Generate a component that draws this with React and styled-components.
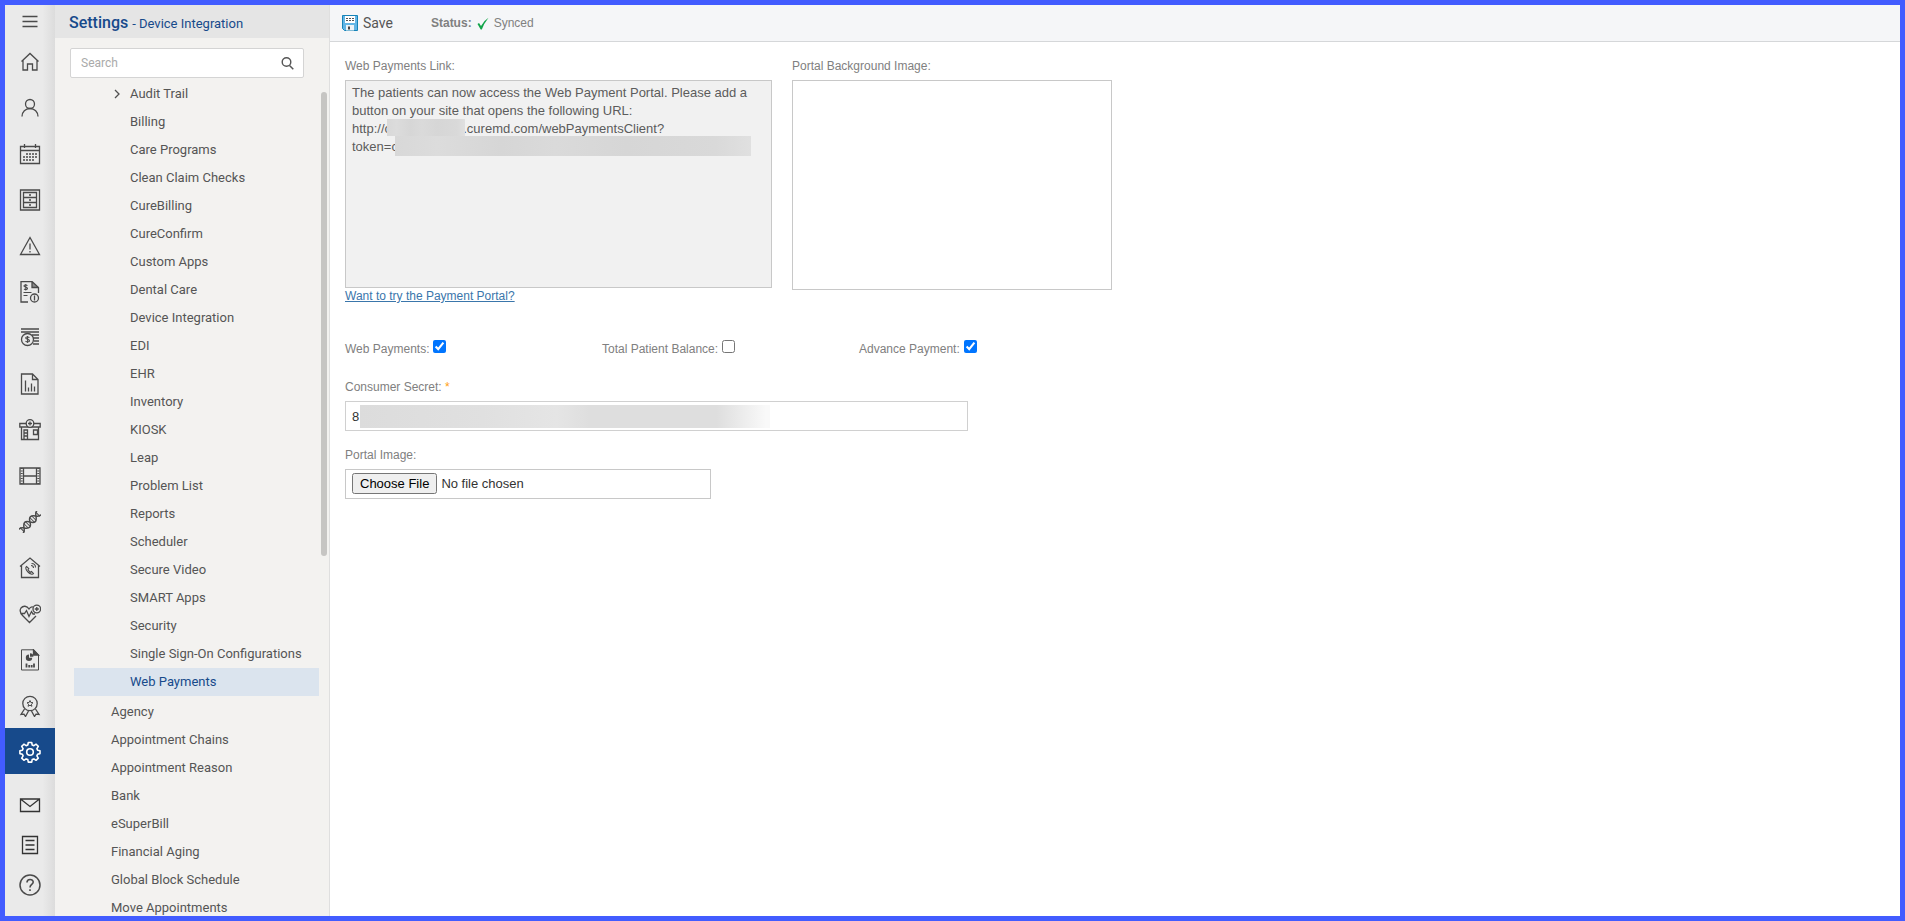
import React, { useState } from "react";
import styled, { createGlobalStyle } from "styled-components";

const GlobalStyle = createGlobalStyle`
  * {
    box-sizing: border-box;
  }
  body {
    margin: 0;
    font-family: "Liberation Sans", Arial, sans-serif;
    font-size: 12px;
    color: #808080;
    background: #fff;
  }
`;

const Page = styled.div`
  display: flex;
  height: 100vh;
  border: 5px solid #425cff;
  overflow: hidden;
`;

const Rail = styled.nav`
  display: flex;
  flex-direction: column;
  flex-shrink: 0;
  width: 50px;
  background: linear-gradient(to right, #eaeaea 75%, #dcdcdc);
`;
const RailButton = styled.button`
  display: flex;
  align-items: center;
  justify-content: center;
  height: ${(props) => props.$height || 46}px;
  flex-shrink: 0;
  padding: ${(props) => (props.$height ? 0 : 2)}px 0 0;
  border: none;
  color: ${(props) => (props.$active ? "#fff" : "#4a4a4a")};
  background: ${(props) => (props.$active ? "#174a8b" : "transparent")};
  cursor: pointer;
`;
const RailFooter = styled.div`
  display: flex;
  flex-direction: column;
  padding-top: 11px;
  flex-shrink: 0;
`;

const Sidebar = styled.aside`
  display: flex;
  flex-direction: column;
  flex-shrink: 0;
  width: 275px;
  border-right: 1px solid #dfdfdf;
  background: #f3f2f0;
  color: #555;
  font-family: Roboto, sans-serif;
`;
const SidebarHeader = styled.h1`
  flex-shrink: 0;
  height: 33px;
  margin: 0;
  padding: 0 14px;
  background: #e5e5e5;
  color: #174a8b;
  font-size: 16px;
  font-weight: 500;
  line-height: 35px;
`;
const HeaderDetail = styled.span`
  font-size: 13px;
  font-weight: 400;
`;
const SearchBox = styled.div`
  display: flex;
  align-items: center;
  flex-shrink: 0;
  height: 30px;
  margin: 10px 25px 2px 15px;
  padding: 0 9px 0 10px;
  border: 1px solid #d4d4d4;
  border-radius: 2px;
  background: #fff;
`;
const SearchInput = styled.input`
  flex: 1;
  min-width: 0;
  padding: 0;
  border: none;
  outline: none;
  font-family: inherit;
  font-size: 12px;
  &::placeholder {
    color: #aaa;
  }
`;
const SearchButton = styled.button`
  display: flex;
  padding: 0;
  border: none;
  background: none;
  color: #555;
`;
const TreeArea = styled.div`
  display: flex;
  flex: 1;
  min-height: 0;
  overflow: hidden;
`;
const Tree = styled.ul`
  flex: 1;
  margin: 0;
  padding: 0 2px 0 19px;
  list-style: none;
`;
const SubTree = styled.ul`
  margin: 0 0 2px;
  padding: 0;
  list-style: none;
`;
const TreeLink = styled.a`
  display: flex;
  align-items: center;
  height: 28px;
  padding: 0 0 2px ${(props) => (props.$nested ? 56 : 37)}px;
  background: ${(props) => (props.$active ? "#dbe4ee" : "transparent")};
  color: ${(props) => (props.$active ? "#174a8b" : "#555")};
  font-size: 13px;
  text-decoration: none;
  white-space: nowrap;
`;
const Expander = styled.svg`
  margin: 2px 10px 0 -16px;
`;
const ScrollThumb = styled.div`
  width: 6px;
  height: 464px;
  margin: 12px 2px 0 0;
  border-radius: 3px;
  background: #c6c5c3;
`;

const Main = styled.main`
  flex: 1;
  min-width: 0;
`;
const Toolbar = styled.div`
  display: flex;
  align-items: center;
  height: 37px;
  padding: 0 12px;
  border-bottom: 1px solid #d5d7d9;
  background: #f5f6f8;
`;
const SaveButton = styled.button`
  display: flex;
  align-items: center;
  gap: 5px;
  margin-right: 38px;
  padding: 0;
  border: none;
  background: none;
  color: #555;
  font-family: Roboto, sans-serif;
  font-size: 14px;
`;
const Status = styled.div`
  display: flex;
  align-items: center;
  gap: 5px;
`;

const Form = styled.form`
  padding: 16px 15px;
`;
const TopRow = styled.div`
  display: flex;
  align-items: flex-start;
  gap: 20px;
`;
const Field = styled.div`
  display: flex;
  flex-direction: column;
  align-items: flex-start;
  margin-bottom: ${(props) => props.$gap || 0}px;
`;
const Label = styled.label`
  line-height: 16px;
  margin-bottom: 6px;
`;
const Required = styled.span`
  color: #ffa011;
`;
const Covered = styled.div`
  position: relative;
  display: flex;
`;
const LinkText = styled.textarea`
  width: 427px;
  height: 208px;
  padding: 3px 6px;
  border: 1px solid #c8c8c8;
  outline: none;
  resize: none;
  background: #f1f1f1;
  color: #5c5c5c;
  font-family: inherit;
  font-size: 13px;
  line-height: 18px;
`;
/* hides the private part of a value */
const Redaction = styled.span`
  position: absolute;
  left: ${(props) => props.$left}px;
  top: ${(props) => props.$top}px;
  width: ${(props) => props.$width}px;
  height: ${(props) => props.$height}px;
  background: ${(props) =>
    props.$fade
      ? "linear-gradient(to right, #dcdcdc, #e0e0e0 30%, #e5e5e5 48%, #dedede 56%, #dedede 87%, #f9f9f9 99%)"
      : "linear-gradient(to right, #d8d8d8, #dcdcdc 12%, #d6d6d6 30%, #dadada 45%, #d6d6d6 65%, #d9d9d9 90%, #e0e0e0)"};
`;
const PortalLink = styled.a`
  color: #3a76ab;
  line-height: 16px;
`;
const ImagePreview = styled.div`
  width: 320px;
  height: 210px;
  border: 1px solid #c8c8c8;
`;
const CheckRow = styled.div`
  display: flex;
  margin: 36px 0 21px;
`;
const CheckField = styled.div`
  display: flex;
  align-items: center;
  width: 257px;
  height: 18px;
`;
const CheckBox = styled.input`
  width: 13px;
  height: 13px;
  margin: 0 0 6px 4px;
`;
const SecretInput = styled.input`
  width: 623px;
  height: 30px;
  padding: 0 6px;
  border: 1px solid #d0d0d0;
  outline: none;
  color: #333;
  font-family: inherit;
  font-size: 13px;
`;
const FileInput = styled.input`
  width: 366px;
  height: 30px;
  padding: 3px 6px;
  border: 1px solid #c8c8c8;
  color: #333;
  font-family: inherit;
  font-size: 13px;
`;

const Icon = ({ size = 22, children }) => (
  <svg
    width={size}
    height={size}
    viewBox="0 0 22 22"
    fill="none"
    stroke="currentColor"
    strokeWidth="1.3"
    aria-hidden="true"
  >
    {children}
  </svg>
);

const icons = {
  menu: <path d="M3.5 5.5h15M3.5 10.5h15M3.5 15.5h15" />,
  home: <path d="M2.5 10.500 11 2.500l8.500 8M4 9.500v9.500h4.500v-6h5v6H18V9.500" />,
  user: (
    <>
      <circle cx="11" cy="7" r="4.500" />
      <path d="M3 19.500c0-4.500 3.500-8 8-8s8 3.500 8 8" />
    </>
  ),
  calendar: (
    <>
      <path d="M1.500 3.500h19v17h-19zM1.500 7.500h19M5.500 1v4M16.500 1v4" />
      <path d="M7 11h12M4 14h15M4 17h11" strokeDasharray="2 1" />
    </>
  ),
  cabinet: (
    <>
      <path d="M1.500 1h19v20h-19zM4.500 3.500h13v15h-13zM4.500 8.500h13M4.500 13.500h13" />
      <path d="M10 6h2M10 11h2M10 16h2" strokeWidth="1.5" />
    </>
  ),
  alert: (
    <>
      <path d="M11 2.500 20.500 19.500h-19z" />
      <path d="M11 8.500v6M11 16v1.500" />
    </>
  ),
  bill: (
    <>
      <path d="M9 21H2V.5h11l6.500 6V12M13 .5v6h6.500" />
      <path d="M13 .5v6h6z" fill="currentColor" stroke="none" opacity="0.6" />
      <path
        d="M8.500 4.500c-2-1-3.500-.5-3.500.5 0 1.500 3.500.5 3.500 2.500 0 1.200-2 1.500-3.500.5M6.800 3v6.500M4.500 11.500h8M4.500 14.500h4"
        strokeWidth="1.1"
      />
      <circle cx="15.500" cy="17" r="4" />
      <path d="M15.500 14.500v5" />
    </>
  ),
  money: (
    <>
      <path d="M2 2h18M2 5h18M13 8h7M14 11h6M15 14h5M14 17h6" />
      <circle cx="8.500" cy="12.500" r="6" />
      <path
        d="M10.500 10.500c-2-1-3.800-.5-3.800.5 0 1.500 3.800 1 3.800 2.700 0 1.300-2.300 1.500-4 .5M8.600 9v7"
        strokeWidth="1.1"
      />
    </>
  ),
  report: (
    <>
      <path d="M2.500 1h11l5.500 5.500V21H2.500zM13.500 1v5.500H19" />
      <path d="M6.500 18.500V7.500M9.500 18.500v-4M12.500 18.500v-8M15.500 18.500v-5" />
    </>
  ),
  clinic: (
    <>
      <path d="M2.500 8v12.500h17V8M.8 8V4.500h20.400V8z" />
      <circle cx="11" cy="4.500" r="3.800" fill="#eaeaea" />
      <path d="M11 2.500v4M9 4.500h4M5 20v-9h3.500v9M5 14h3.500M5 17h3.500M14.500 11h4v4.500h-4z" />
    </>
  ),
  film: (
    <>
      <path d="M1 3h20v16H1zM4.500 3v16M17.500 3v16M4.500 11h13" />
      <path d="M2.700 3v16M19.300 3v16" strokeWidth="2" strokeDasharray="1 1.5" />
    </>
  ),
  dna: (
    <g transform="translate(11 11) rotate(-45)">
      <path
        d="M-13-2.500C-9-4-8 3.500-4 3.500S0-3.500 4-3.500 9 4 13 2.500M-13 3C-9 4-8-3.500-4-3.500S0 3.500 4 3.500 9-4 13-3"
        strokeWidth="1.5"
      />
      <path d="M-11-3v6M-5.500-3v6M-3-3v6M3-3v6M5.500-3v6M11-3v6" strokeWidth="1" />
    </g>
  ),
  homeCall: (
    <>
      <path d="M1 9.500 11 1l10 8.500M2.500 8.500v12h17v-12" />
      <path
        d="M7.500 9.500c-1.500 1-.5 3.500 1.500 5.500s4.500 3 5.500 1.500l-2-2-1.200.8-2.300-2.500.8-1.200zM12 8.500c1.500 0 2.500 1 2.500 2.500M12.500 6.500c2.500 0 4 1.800 4 4"
        strokeWidth="1.1"
      />
    </>
  ),
  heart: (
    <>
      <path d="M14 4c-1.500-.5-3 .3-4 2C8 2.500 4 2.500 2 5c-2 3 0 6 2 8l6.500 6.500L17 13M1.500 10.500h4l2-3 2.500 6 2.500-5 1.500 2.500h2" />
      <circle cx="17.800" cy="6" r="3.800" />
      <path d="M17.800 4v4M15.800 6h4" />
    </>
  ),
  chartDoc: (
    <>
      <path d="M2.500.8h12L19.500 6v15h-17z" strokeWidth="1" />
      <path d="M14.500.8V6h5z" fill="currentColor" />
      <path
        d="M10 5.500a3.200 3.200 0 1 0 3.200 3.200H10zM11 4.300v3.400h3.400A3.400 3.400 0 0 0 11 4.300z"
        fill="currentColor"
        stroke="none"
      />
      <path
        d="M7.500 18.500v-4M10.200 18.500V16M12.700 18.500V16M15 18.500v-4"
        strokeWidth="1.8"
      />
    </>
  ),
  award: (
    <>
      <circle cx="11" cy="8.500" r="7.200" />
      <path
        d="m11 5.500.9 2 2.100.2-1.600 1.500.5 2.100-1.900-1.100-1.900 1.100.5-2.100L8 7.700l2.100-.2z"
        strokeWidth="1"
      />
      <path d="M5.500 14 2 19.500l3-.3 1.500 2.300 3-5.500M16.500 14l3.500 5.500-3-.3-1.500 2.300-3-5.500" />
    </>
  ),
  gear: (
    <>
      <path
        d="M9.300 1.500h3.400l.5 2.500 1.700.7 2.200-1.500 2.200 2.200-1.400 2.200.7 1.700 2.400.5v2.800l-2.400.6-.7 1.700 1.400 2.200-2.300 2.200-2.100-1.400-1.700.7-.5 2.500H9.300l-.5-2.500-1.700-.7-2.200 1.400-2.200-2.200 1.400-2.200-.7-1.700-2.500-.6V9.800l2.500-.5.7-1.700-1.400-2.200 2.200-2.200 2.200 1.500L8.800 4z"
        strokeWidth="1.6"
        strokeLinejoin="round"
      />
      <circle cx="11" cy="11" r="3.300" strokeWidth="1.6" />
    </>
  ),
  mail: (
    <path d="M1.500 5h19v12.500h-19zM1.500 5l9.500 7.500L20.500 5" stroke="#333" />
  ),
  notes: (
    <>
      <path d="M3.500 2.500h15v17h-15z" stroke="#333" />
      <path d="M6.500 6.500h9M6.500 11h9M6.500 15.500h9" stroke="#333" />
    </>
  ),
  help: (
    <>
      <circle cx="11" cy="11" r="10" strokeWidth="1.5" />
      <path
        d="M8 8.500c0-4 6.200-4 6.200-.5 0 2.500-3.200 2.500-3.200 5.500M11 15.300V17"
        strokeWidth="1.6"
      />
    </>
  ),
};

const railItems = [
  ["Home", "home"],
  ["Patient", "user"],
  ["Scheduler", "calendar"],
  ["Documents", "cabinet"],
  ["Alerts", "alert"],
  ["Billing", "bill"],
  ["Payments", "money"],
  ["Reports", "report"],
  ["Facility", "clinic"],
  ["Media", "film"],
  ["Genomics", "dna"],
  ["Home Care", "homeCall"],
  ["Population Health", "heart"],
  ["Analytics", "chartDoc"],
  ["Quality", "award"],
  ["Settings", "gear"],
];

const footerItems = [
  ["Messages", "mail"],
  ["Notes", "notes"],
  ["Help", "help"],
];

const applicationItems = [
  "Audit Trail",
  "Billing",
  "Care Programs",
  "Clean Claim Checks",
  "CureBilling",
  "CureConfirm",
  "Custom Apps",
  "Dental Care",
  "Device Integration",
  "EDI",
  "EHR",
  "Inventory",
  "KIOSK",
  "Leap",
  "Problem List",
  "Reports",
  "Scheduler",
  "Secure Video",
  "SMART Apps",
  "Security",
  "Single Sign-On Configurations",
  "Web Payments",
];

const practiceItems = [
  "Agency",
  "Appointment Chains",
  "Appointment Reason",
  "Bank",
  "eSuperBill",
  "Financial Aging",
  "Global Block Schedule",
  "Move Appointments",
];

const SaveIcon = () => (
  <svg width="16" height="16" viewBox="0 0 16 16" aria-hidden="true">
    <path d="M.5.5h15v15h-13l-2-2z" fill="#62b5e5" stroke="#1583b8" />
    <path d="M3 1h10v7H3z" fill="#fff" />
    <path d="M4 3.500h8M4 5.500h8" stroke="#555" strokeDasharray="2 1" />
    <path d="M4 10h8v5.500H4z" fill="#eef3f6" />
    <path d="M6 11.500h2v3H6z" fill="#444" />
  </svg>
);

const CheckIcon = () => (
  <svg width="12" height="13" viewBox="0 0 12 13" aria-hidden="true">
    <path
      d="M.5 7 2 6l2 3Q7 3.500 11.500.8 7 6.500 4.800 12.500H3.700z"
      fill="#12a54a"
    />
  </svg>
);

const App = () => {
  const [search, setSearch] = useState("");
  const [selected, setSelected] = useState("Web Payments");
  const [secret, setSecret] = useState("8");

  const renderItem = (name, nested) => (
    <li key={name}>
      <TreeLink
        href="#"
        $nested={nested}
        $active={selected === name}
        onClick={() => setSelected(name)}
      >
        {name === "Audit Trail" && (
          <Expander
            width="6"
            height="10"
            viewBox="0 0 6 10"
            fill="none"
            stroke="#505050"
          >
            <path d="m1 1 4 4-4 4" strokeWidth="1.3" />
          </Expander>
        )}
        {name}
      </TreeLink>
    </li>
  );

  return (
    <>
      <GlobalStyle />
      <Page>
        <Rail>
          <RailButton $height={33} aria-label="Menu">
            <Icon>{icons.menu}</Icon>
          </RailButton>
          {railItems.map(([name, icon]) => (
            <RailButton key={name} aria-label={name} $active={icon === "gear"}>
              <Icon>{icons[icon]}</Icon>
            </RailButton>
          ))}
          <RailFooter>
            {footerItems.map(([name, icon]) => (
              <RailButton key={name} aria-label={name} $height={40}>
                <Icon>{icons[icon]}</Icon>
              </RailButton>
            ))}
          </RailFooter>
        </Rail>

        <Sidebar>
          <SidebarHeader>
            Settings <HeaderDetail>- Device Integration</HeaderDetail>
          </SidebarHeader>
          <SearchBox>
            <SearchInput
              aria-label="Search"
              placeholder="Search"
              value={search}
              onChange={(e) => setSearch(e.target.value)}
            />
            <SearchButton aria-label="Run search">
              <svg
                width="13"
                height="13"
                viewBox="0 0 13 13"
                fill="none"
                stroke="currentColor"
              >
                <circle cx="5.500" cy="5" r="4.300" strokeWidth="1.4" />
                <path d="m8.500 8.500 3.800 3.800" strokeWidth="1.5" />
              </svg>
            </SearchButton>
          </SearchBox>
          <TreeArea>
            <Tree>
              <li>
                <SubTree>
                  {applicationItems.map((name) => renderItem(name, true))}
                </SubTree>
              </li>
              {practiceItems.map((name) => renderItem(name, false))}
            </Tree>
            <ScrollThumb />
          </TreeArea>
        </Sidebar>

        <Main>
          <Toolbar>
            <SaveButton type="button">
              <SaveIcon />
              Save
            </SaveButton>
            <Status>
              <b>Status:</b>
              <CheckIcon />
              <span>Synced</span>
            </Status>
          </Toolbar>
          <Form>
            <TopRow>
              <Field>
                <Label htmlFor="link">Web Payments Link:</Label>
                <Covered>
                  <LinkText
                    id="link"
                    readOnly
                    value={
                      "The patients can now access the Web Payment Portal. Please add a button on your site that opens the following URL:\nhttp://c                    .curemd.com/webPaymentsClient?\ntoken=c"
                    }
                  />
                  <Redaction $left={42} $top={39} $width={78} $height={17} />
                  <Redaction $left={50} $top={56} $width={356} $height={20} />
                </Covered>
                <PortalLink href="#">Want to try the Payment Portal?</PortalLink>
              </Field>
              <Field>
                <Label as="span">Portal Background Image:</Label>
                <ImagePreview />
              </Field>
            </TopRow>

            <CheckRow>
              <CheckField>
                <label htmlFor="webPayments">Web Payments:</label>
                <CheckBox id="webPayments" type="checkbox" defaultChecked />
              </CheckField>
              <CheckField>
                <label htmlFor="totalBalance">Total Patient Balance:</label>
                <CheckBox id="totalBalance" type="checkbox" />
              </CheckField>
              <CheckField>
                <label htmlFor="advancePayment">Advance Payment:</label>
                <CheckBox id="advancePayment" type="checkbox" defaultChecked />
              </CheckField>
            </CheckRow>

            <Field $gap={16}>
              <Label htmlFor="secret">
                Consumer Secret: <Required>*</Required>
              </Label>
              <Covered>
                <SecretInput
                  id="secret"
                  value={secret}
                  onChange={(e) => setSecret(e.target.value)}
                />
                <Redaction $fade $left={15} $top={4} $width={410} $height={23} />
              </Covered>
            </Field>
            <Field>
              <Label htmlFor="portalImage">Portal Image:</Label>
              <FileInput id="portalImage" type="file" />
            </Field>
          </Form>
        </Main>
      </Page>
    </>
  );
};

export default App;
